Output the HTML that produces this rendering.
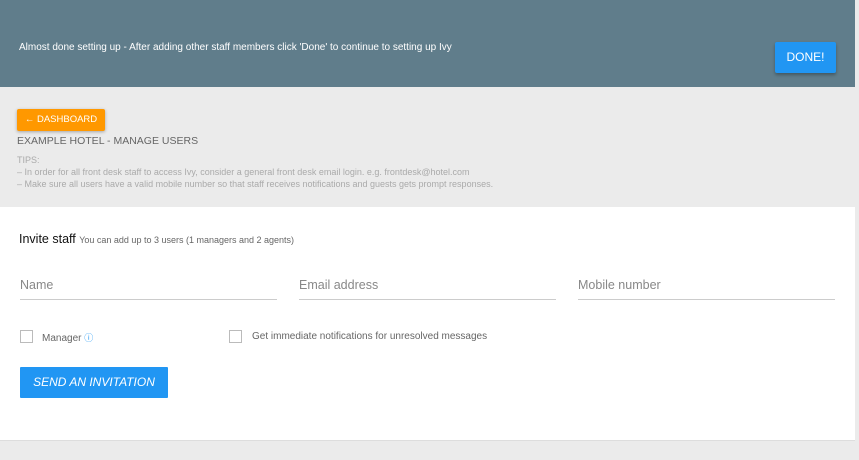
<!DOCTYPE html>
<html><head><style>
body{margin:0;width:859px;height:460px;background:#ebebeb;font-family:"Liberation Sans",Arial,sans-serif;position:relative;overflow:hidden}
.hdr{position:absolute;left:0;top:0;width:855px;height:87px;background:#607d8b}
.hdr .t{position:absolute;left:19px;top:42px;font-size:10px;color:#fff}
.done{position:absolute;left:775px;top:42px;width:61px;height:31px;background:#2196f3;color:#fff;font-size:12px;line-height:31px;text-align:center;border-radius:2px;box-shadow:0 2px 3px rgba(0,0,0,.3)}
.dash{position:absolute;left:17px;top:109px;width:88px;height:22px;background:#ff9800;color:#fff;font-size:9.5px;line-height:22px;text-align:center;border-radius:2px;box-shadow:0 1px 3px rgba(0,0,0,.3)}
.title{position:absolute;left:17px;top:135px;font-size:10.5px;color:#666}
.tips{position:absolute;left:17px;top:154px;font-size:9px;color:#aaa;line-height:12px}
.panel{position:absolute;left:0;top:207px;width:855px;height:233px;background:#fff;border-bottom:1px solid #ddd}
.inv{position:absolute;left:19px;top:232px;font-size:12.5px;color:#111}
.inv span{font-size:9px;color:#666}
.f{position:absolute;top:278px;font-size:12.5px;color:#888;border-bottom:1px solid #ccc;height:21px;width:257px}
.cb{position:absolute;top:330px;width:11px;height:11px;border:1px solid #bbb}
.lbl{position:absolute;top:331px;font-size:10px;color:#666}
.send{position:absolute;left:20px;top:367px;width:148px;height:31px;background:#2196f3;color:#fff;font-size:12px;font-style:italic;line-height:31px;text-align:center;border-radius:1px}
</style></head><body>
<div class="hdr"><div class="t">Almost done setting up - After adding other staff members click 'Done' to continue to setting up Ivy</div></div>
<div class="done">DONE!</div>
<div class="dash">← DASHBOARD</div>
<div class="title">EXAMPLE HOTEL - MANAGE USERS</div>
<div class="tips">TIPS:<br>– In order for all front desk staff to access Ivy, consider a general front desk email login. e.g. frontdesk@hotel.com<br>– Make sure all users have a valid mobile number so that staff receives notifications and guests gets prompt responses.</div>
<div class="panel"></div>
<div class="inv">Invite staff <span>You can add up to 3 users (1 managers and 2 agents)</span></div>
<div class="f" style="left:20px">Name</div>
<div class="f" style="left:299px">Email address</div>
<div class="f" style="left:578px">Mobile number</div>
<div class="cb" style="left:20px"></div>
<div class="lbl" style="left:42px">Manager <span style="color:#2196f3;font-size:9px">ⓘ</span></div>
<div class="cb" style="left:229px"></div>
<div class="lbl" style="left:252px">Get immediate notifications for unresolved messages</div>
<div class="send">SEND AN INVITATION</div>
</body></html>
